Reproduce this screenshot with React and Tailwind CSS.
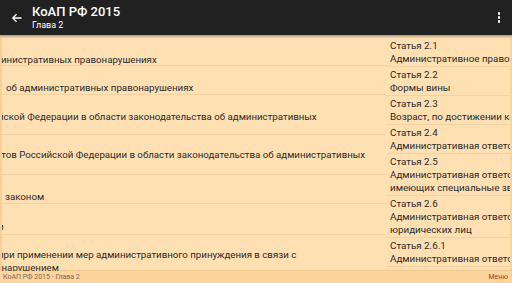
import React from "react";

const NB = "\u00a0";

function LRow({ h, pt = "pt-[2px]", lines, last }) {
  return (
    <div
      className={`${h} ${pt} ${last ? "" : "border-b border-[#f3d3a3]"} overflow-hidden shrink-0`}
    >
      {lines.map((l, i) => (
        <div key={i} className={`h-[13px] leading-[13px] whitespace-nowrap ${l.ml || ""}`}>
          {l.t || NB}
        </div>
      ))}
    </div>
  );
}

function RRow({ lines, last }) {
  return (
    <div className={`py-[1px] pl-[4px] ${last ? "" : "border-b border-[#f3d3a3]"} shrink-0`}>
      {lines.map((l, i) => (
        <div key={i} className="h-[13px] leading-[13px] whitespace-nowrap">
          {l}
        </div>
      ))}
    </div>
  );
}

export default function App() {
  return (
    <div
      className="w-[512px] h-[283px] overflow-hidden flex flex-col bg-[#FFE0B2] text-[#2a2a2a] relative"
      style={{ fontFamily: "Roboto, 'Noto Sans', sans-serif" }}
    >
      <div className="h-[35px] bg-[#212121] flex items-center shrink-0 relative z-10 shadow-[0_1px_3px_rgba(0,0,0,0.45)]">
        <div className="w-[32px] flex items-center justify-center pl-[1px]">
          <svg width="12" height="12" viewBox="0 0 24 24" fill="none" stroke="white" strokeWidth="2.6">
            <path d="M21 12H4M11 4.5L3.5 12l7.5 7.5" />
          </svg>
        </div>
        <div className="flex flex-col text-white">
          <div className="text-[13px] font-medium leading-[15px]">КоАП РФ 2015</div>
          <div className="text-[9px] leading-[11px] mt-[1px]">Глава 2</div>
        </div>
        <div className="flex-1" />
        <div className="w-[26px] flex flex-col items-center gap-[1.5px]">
          <div className="w-[2.5px] h-[2.5px] bg-white rounded-full" />
          <div className="w-[2.5px] h-[2.5px] bg-white rounded-full" />
          <div className="w-[2.5px] h-[2.5px] bg-white rounded-full" />
        </div>
      </div>

      <div className="flex-1 flex overflow-hidden pt-[3px] relative">
        <div className="absolute left-0 top-0 bottom-0 w-[2px] bg-[#f7cf98]" />
        <div className="absolute right-0 top-0 bottom-0 w-[2px] bg-[#f7d39f]" />
        <div className="w-[386px] flex flex-col overflow-hidden shrink-0 text-[9.7px]">
          <LRow h="h-[28px]" lines={[{}, { t: "инистративных правонарушениях", ml: "ml-[1px]" }]} />
          <LRow h="h-[29px]" lines={[{}, { t: "об административных правонарушениях", ml: "ml-[6px]" }]} />
          <LRow h="h-[40px]" lines={[{}, { t: "йской Федерации в области законодательства об административных", ml: "-ml-[2px]" }, {}]} />
          <LRow h="h-[40px]" pt="pt-0" lines={[{}, { t: "ктов Российской Федерации в области законодательства об административных", ml: "-ml-[4px]" }, {}]} />
          <LRow h="h-[29px]" lines={[{}, { t: "законом", ml: "ml-[5px]" }]} />
          <LRow h="h-[31px]" pt="pt-[3px]" lines={[{}, { t: "и", ml: "-ml-[2px]" }]} />
          <LRow
            h="h-[60px]"
            pt="pt-0"
            last
            lines={[
              {},
              { t: "при применении мер административного принуждения в связи с", ml: "-ml-[2px]" },
              { t: "онарушением", ml: "-ml-[4px]" },
            ]}
          />
        </div>
        <div className="flex-1 flex flex-col overflow-hidden text-[9.8px]">
          <RRow lines={["Статья 2.1", "Административное правонарушение"]} />
          <RRow lines={["Статья 2.2", "Формы вины"]} />
          <RRow lines={["Статья 2.3", "Возраст, по достижении которого"]} />
          <RRow lines={["Статья 2.4", "Административная ответственность"]} />
          <RRow lines={["Статья 2.5", "Административная ответственность", "имеющих специальные звания"]} />
          <RRow lines={["Статья 2.6", "Административная ответственность", "юридических лиц"]} />
          <RRow lines={["Статья 2.6.1", "Административная ответственность"]} />
          <RRow last lines={["Статья 2.6.2", "Административная ответственность"]} />
        </div>
      </div>

      <div className="h-[12px] shrink-0 bg-[#FDD49B] flex items-center justify-between px-[3px] text-[7px] leading-[12px] relative z-10 shadow-[0_-1px_1px_rgba(200,140,60,0.25)]">
        <span className="text-[#7a6a55]">КоАП РФ 2015 - Глава 2</span>
        <span className="text-[#b0342c] pr-[1px]">Меню</span>
      </div>
    </div>
  );
}
